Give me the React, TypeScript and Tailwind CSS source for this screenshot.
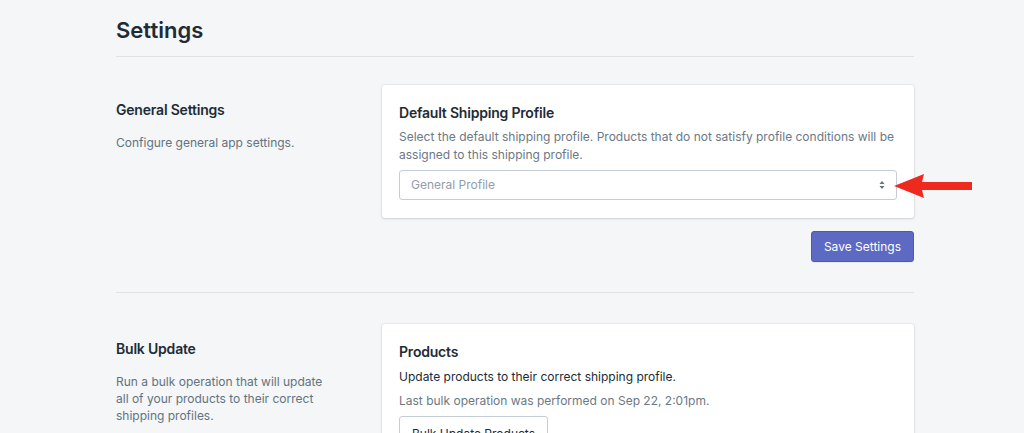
import React from 'react';

// Settings page · annotated sections, Polaris-like look.
function Section({
  title,
  description,
  children,
  descWidth = 'max-w-[230px]',
}: {
  title: string;
  description: string;
  children: React.ReactNode;
  descWidth?: string;
}) {
  return (
    <div className="flex">
      <div className="w-[266px] shrink-0 pt-[15px]">
        <h2 className="text-[14px] font-semibold leading-[20px] tracking-[-0.2px] text-[#212b36]">{title}</h2>
        <p className={`mt-[14px] text-[12px] leading-[17px] text-[#637381] ${descWidth}`}>{description}</p>
      </div>
      <div className="flex-1">{children}</div>
    </div>
  );
}

const card =
  'bg-white rounded-[3px] shadow-[0_0_0_1px_rgba(63,63,68,0.05),0_1px_3px_0_rgba(63,63,68,0.15)] px-[17px] pt-[18px] pb-[18px]';

export default function App() {
  return (
    <main
      className="min-h-screen bg-[#f4f6f8] overflow-hidden"
      style={{ fontFamily: 'Inter, "Noto Sans", sans-serif' }}
    >
      <div className="w-[798px] ml-[116px] pt-[16px]">
        <header className="pb-[12px] border-b border-[#dfe3e8]">
          <h1 className="text-[22px] font-semibold leading-[28px] text-[#212b36]">Settings</h1>
        </header>

        <div className="pt-[28px] pb-[30px] border-b border-[#dfe3e8]">
          <Section title="General Settings" description="Configure general app settings.">
            <div className="relative">
              <div className={card}>
                <h3 className="text-[14px] font-semibold leading-[20px] tracking-[-0.2px] text-[#212b36]">
                  Default Shipping Profile
                </h3>
                <p className="mt-[5px] text-[12px] leading-[18px] text-[#6b7885]">
                  Select the default shipping profile. Products that do not satisfy profile conditions will be assigned to this
                  shipping profile.
                </p>
                <div className="mt-[6px] h-[30px] rounded-[3px] border border-[#c4cdd5] flex items-center justify-between pl-[11px] pr-[10px]">
                  <span className="text-[12px] text-[#919eab]">General Profile</span>
                  <svg width="8" height="12" viewBox="0 0 8 12" fill="#637381">
                    <path d="M4 2 L6.5 5 H1.5 Z" />
                    <path d="M4 10 L1.5 7 H6.5 Z" />
                  </svg>
                </div>
              </div>
              {/* red annotation arrow */}
              <svg
                className="absolute left-[511px] top-[87px]"
                width="80"
                height="28"
                viewBox="0 0 80 28"
                fill="#ee2a1e"
              >
                <path d="M1 14 L31 2 L29 10 H79 V18 H29 L31 26 Z" />
              </svg>
            </div>
            <div className="flex justify-end mt-[13px]">
              <button className="h-[31px] px-[12px] rounded-[3px] bg-[#5c6ac4] text-white text-[12px] border border-[#4959bd] shadow-[0_1px_0_0_rgba(22,29,37,0.05)]">
                Save Settings
              </button>
            </div>
          </Section>
        </div>

        <div className="pt-[31px]">
          <Section
            title="Bulk Update"
            description="Run a bulk operation that will update all of your products to their correct shipping profiles."
            descWidth="max-w-[212px]"
          >
            <div className={card}>
              <h3 className="text-[14px] font-semibold leading-[20px] tracking-[-0.2px] text-[#212b36]">Products</h3>
              <p className="mt-[5px] text-[12px] leading-[20px] text-[#212b36]">
                Update products to their correct shipping profile.
              </p>
              <p className="mt-[4px] text-[12px] leading-[20px] text-[#6b7885]">
                Last bulk operation was performed on Sep 22, 2:01pm.
              </p>
              <button className="mt-[5px] h-[36px] px-[12px] rounded-[3px] border border-[#c4cdd5] bg-white text-[12px] text-[#212b36] shadow-[0_1px_0_0_rgba(22,29,37,0.05)]">
                Bulk Update Products
              </button>
            </div>
          </Section>
        </div>
      </div>
    </main>
  );
}
